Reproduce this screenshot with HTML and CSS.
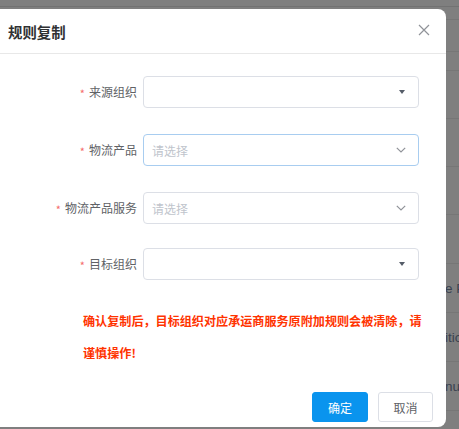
FILE: index.html
```html
<!DOCTYPE html>
<html lang="zh-CN">
<head>
<meta charset="utf-8">
<title>规则复制</title>
<link rel="stylesheet" href="styles.css">
</head>
<body>
<div class="backdrop">
  <div class="trow r0"></div>
  <div class="trow r1"></div>
  <div class="trow r2"></div>
  <div class="trow r3"></div>
  <div class="trow"></div>
  <div class="trow"></div>
  <div class="trow"></div>
  <div class="trow tall"></div>
  <div class="trow tall"><span class="cell">e P</span></div>
  <div class="trow tall"><span class="cell">itic</span></div>
  <div class="trow tall"><span class="cell">nu</span></div>
</div>

<div class="dialog">
  <div class="dialog-header">
    <span class="dialog-title">规则复制</span>
    <button class="close" type="button" aria-label="关闭">
      <svg width="12" height="12" viewBox="0 0 12 12"><path d="M1 1L11 11M11 1L1 11" stroke="#909399" stroke-width="1.2" fill="none"/></svg>
    </button>
  </div>
  <div class="dialog-body">
    <div class="form-item">
      <label class="label"><span class="req">*</span>来源组织</label>
      <div class="select"><span class="value"></span><span class="caret"></span></div>
    </div>
    <div class="form-item">
      <label class="label"><span class="req">*</span>物流产品</label>
      <div class="select select-hover"><span class="value placeholder">请选择</span><span class="chev"><svg width="10" height="6" viewBox="0 0 10 6"><path d="M0.8 0.8L5 5L9.2 0.8" stroke="#909399" stroke-width="1.2" fill="none"/></svg></span></div>
    </div>
    <div class="form-item">
      <label class="label"><span class="req">*</span>物流产品服务</label>
      <div class="select"><span class="value placeholder">请选择</span><span class="chev"><svg width="10" height="6" viewBox="0 0 10 6"><path d="M0.8 0.8L5 5L9.2 0.8" stroke="#909399" stroke-width="1.2" fill="none"/></svg></span></div>
    </div>
    <div class="form-item">
      <label class="label"><span class="req">*</span>目标组织</label>
      <div class="select"><span class="value"></span><span class="caret"></span></div>
    </div>
    <p class="warning">确认复制后，目标组织对应承运商服务原附加规则会被清除，请谨慎操作!</p>
  </div>
  <div class="dialog-footer">
    <button class="btn btn-primary" type="button">确定</button>
    <button class="btn" type="button">取消</button>
  </div>
</div>
</body>
</html>
```

FILE: styles.css
```css
* { box-sizing: border-box; }

html, body {
  margin: 0;
  padding: 0;
  width: 459px;
  height: 429px;
  overflow: hidden;
  background: #7f7f7f;
  font-family: "Noto Sans CJK SC", "Liberation Sans", sans-serif;
}

.backdrop {
  width: 459px;
}

.trow {
  height: 48px;
  border-bottom: 1px solid #767676;
  display: flex;
  align-items: center;
}
.tall { height: 49px; }
.r0 { height: 7px; border-bottom-color: #727272; }
.r1 { height: 13px; }
.r2 { height: 32px; }
.r3 { height: 19px; }

.cell {
  padding-left: 445px;
  font-family: "Liberation Sans", "Noto Sans", sans-serif;
  font-size: 13.5px;
  color: #3a4250;
  white-space: nowrap;
}

.dialog {
  position: absolute;
  top: 9px;
  left: 0;
  width: 446px;
  height: 418px;
  background: #ffffff;
  border-radius: 0 8px 8px 0;
  display: flex;
  flex-direction: column;
}

.dialog-header {
  height: 45px;
  border-bottom: 1px solid #e8e8e8;
  display: flex;
  align-items: center;
  justify-content: space-between;
  padding: 0 16px 0 8px;
}

.dialog-title {
  font-size: 14.4px;
  font-weight: bold;
  color: #303133;
  line-height: 20px;
  padding-top: 2px;
}

.close {
  border: 0;
  background: transparent;
  padding: 0;
  width: 12px;
  height: 12px;
  display: flex;
  margin-top: -3px;
}

.dialog-body {
  padding-top: 22px;
}

.form-item {
  display: flex;
  height: 32px;
  margin-bottom: 26px;
}
.form-item:nth-child(3) { margin-bottom: 24px; }
.form-item:nth-child(4) { margin-bottom: 0; }

.label {
  width: 143px;
  padding-right: 6px;
  text-align: right;
  font-size: 12px;
  line-height: 32px;
  color: #606266;
  white-space: nowrap;
}

.req {
  color: #f56c6c;
  margin-right: 4px;
  font-size: 11px;
  position: relative;
  top: 1px;
}

.select {
  width: 276px;
  height: 32px;
  border: 1px solid #dcdfe6;
  border-radius: 4px;
  display: flex;
  align-items: center;
  padding: 0 12px 0 8px;
}
.select-hover { border-color: #a8cdf0; }

.value {
  flex: 1;
  font-size: 12px;
  color: #606266;
}
.placeholder { color: #c0c4cc; }

.caret {
  width: 0;
  height: 0;
  border-left: 3.5px solid transparent;
  border-right: 3.5px solid transparent;
  border-top: 4px solid #555c68;
  margin-right: 1px;
  margin-top: -1px;
}

.chev {
  display: flex;
  width: 10px;
  height: 6px;
  margin-top: -1px;
}

.warning {
  margin: 25px 0 0 83px;
  width: 344px;
  font-size: 12.1px;
  font-weight: bold;
  line-height: 31.5px;
  color: #ff3300;
}

.dialog-footer {
  margin-top: 24px;
  display: flex;
  justify-content: flex-end;
  gap: 10px;
  padding-right: 13px;
}

.btn {
  width: 55px;
  height: 30px;
  border: 1px solid #dcdfe6;
  border-radius: 3px;
  background: #ffffff;
  color: #606266;
  font-family: "Noto Sans CJK SC", "Liberation Sans", sans-serif;
  font-size: 12px;
  padding: 0;
}

.btn-primary {
  width: 56px;
  background: #0a94ee;
  border-color: #0a94ee;
  color: #ffffff;
}
```
